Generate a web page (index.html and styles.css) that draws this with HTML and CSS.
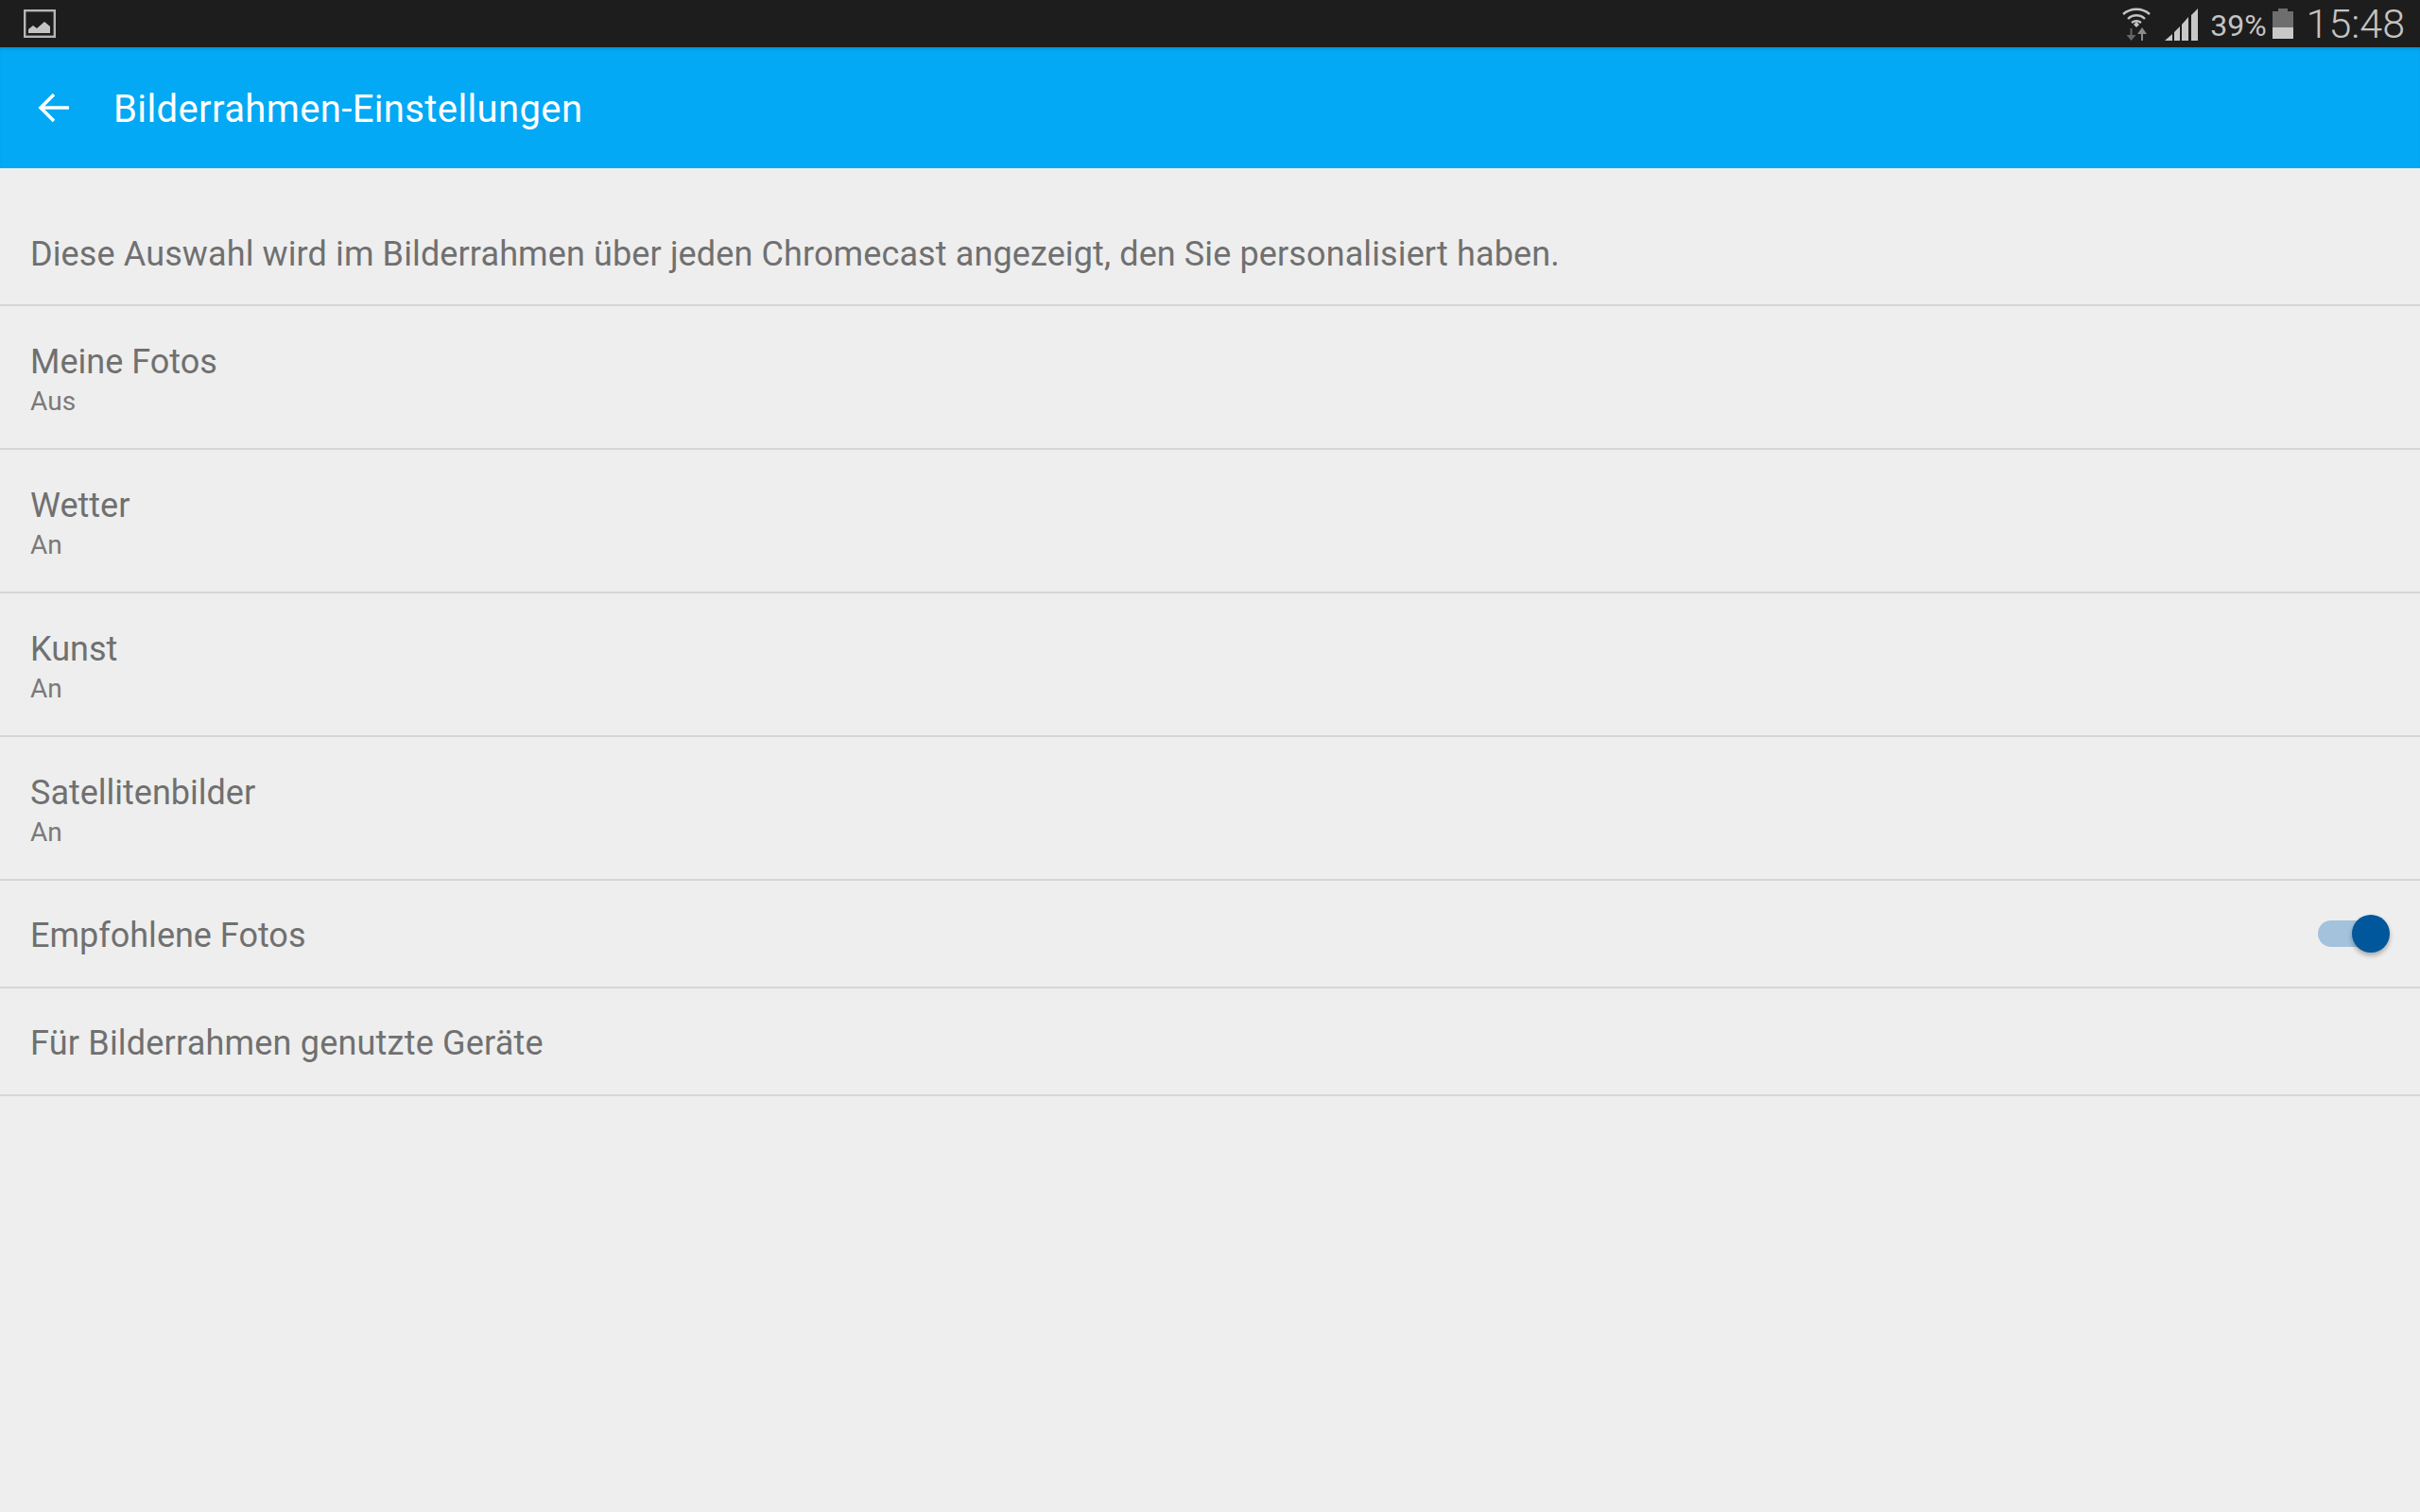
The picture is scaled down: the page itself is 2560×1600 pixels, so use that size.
FILE: index.html
```html
<!DOCTYPE html>
<html lang="de">
    <head>
        <meta charset="UTF-8">
        <meta name="viewport" content="width=device-width, initial-scale=1.0">
        <title>Bilderrahmen-Einstellungen</title>
        <link rel="stylesheet" href="styles.css">
    </head>
    <body>
        <div class="status-bar">
            <svg class="picture-icon" width="36" height="30" viewBox="0 0 36 30">
                <rect x="1.2" y="1.2" width="31.6" height="27.6" fill="none" stroke="#b5b5b5" stroke-width="2.4"/>
                <path d="M5 25 L5 21 L10 17 L14 20 L22 13 L28 18 L28 25 Z" fill="#c4c4c4"/>
            </svg>
            <div class="status-right">
                <svg class="wifi-icon" width="32" height="36" viewBox="0 0 32 36">
                    <path d="M2 7 C10 0 22 0 30 7 M7 12 C12 7 20 7 25 12 M11 16 C14 14 18 14 21 16" fill="none" stroke="#c4c4c4" stroke-width="2.4"/>
                    <path d="M13 18 L16 15 L19 18 L16 21 Z" fill="#c4c4c4"/>
                    <path d="M9.5 22 H11.5 V29 H15.5 L10.5 35 L5.5 29 H9.5 Z" fill="#666666"/>
                    <path d="M21 35 H23 V28 H27 L22 21 L17 28 H21 Z" fill="#8a8a8a"/>
                </svg>
                <svg class="signal-icon" width="36" height="36" viewBox="0 0 36 36">
                    <path d="M0 35 L8 28 V35 Z M10 35 V26 L16 20 V35 Z M18 35 V18 L25 10 V35 Z M28 35 V8 L35 1 V35 Z" fill="#c8c8c8"/>
                </svg>
                <span class="battery-text">39%</span>
                <span class="battery">
                    <span class="battery-cap"></span>
                    <span class="battery-body"><span class="battery-fill"></span></span>
                </span>
                <span class="clock">15:48</span>
            </div>
        </div>

        <div class="app-bar">
            <svg class="back-arrow" width="34" height="32" viewBox="0 0 34 32">
                <path d="M33 16 H3 M17 2 L3 16 L17 30" fill="none" stroke="#fff" stroke-width="3.6"/>
            </svg>
            <span class="app-title">Bilderrahmen-Einstellungen</span>
        </div>

        <div class="intro">Diese Auswahl wird im Bilderrahmen über jeden Chromecast angezeigt, den Sie personalisiert haben.</div>

        <div class="row row-two">
            <div class="row-title">Meine Fotos</div>
            <div class="row-sub">Aus</div>
        </div>
        <div class="row row-two">
            <div class="row-title">Wetter</div>
            <div class="row-sub">An</div>
        </div>
        <div class="row row-two">
            <div class="row-title">Kunst</div>
            <div class="row-sub">An</div>
        </div>
        <div class="row row-two">
            <div class="row-title">Satellitenbilder</div>
            <div class="row-sub">An</div>
        </div>
        <div class="row row-one row-switch">
            <div class="row-title">Empfohlene Fotos</div>
            <div class="switch"><div class="switch-knob"></div></div>
        </div>
        <div class="row row-one">
            <div class="row-title row-title-wide">Für Bilderrahmen genutzte Geräte</div>
        </div>
    </body>
</html>
```

FILE: styles.css
```css
*{
    margin: 0;
    padding: 0;
    box-sizing: border-box;
}

body{
    height: 1600px;
    overflow: hidden;
    background-color: #eeeeee;
    font-family: Roboto, "Liberation Sans", sans-serif;
    color: #707070;
}

.status-bar{
    display: flex;
    align-items: center;
    justify-content: space-between;
    height: 50px;
    padding: 0 16px 0 25px;
    background-color: #1d1d1d;
}

.status-right{
    display: flex;
    align-items: center;
    color: #c4c4c4;
}

.wifi-icon{
    margin: 2px 14px 0 0;
}

.signal-icon{
    margin: 2px 12px 0 0;
}

.battery-text{
    margin: 4px 6px 0 0;
    font-size: 32px;
}

.battery{
    display: flex;
    flex-direction: column;
    align-items: center;
    width: 22px;
    margin-right: 14px;
}

.battery-cap{
    width: 10px;
    height: 3px;
    background-color: #6e6e6e;
}

.battery-body{
    display: flex;
    align-items: flex-end;
    width: 22px;
    height: 29px;
    background-color: #6e6e6e;
}

.battery-fill{
    width: 100%;
    height: 12px;
    background-color: #c8c8c8;
}

.clock{
    font-size: 43px;
    font-weight: 300;
}

.app-bar{
    display: flex;
    align-items: center;
    height: 128px;
    padding-left: 40px;
    background-color: #03a9f4;
    box-shadow: inset 0 4px 4px -3px rgba(0, 0, 0, 0.2);
}

.back-arrow{
    margin-right: 46px;
}

.app-title{
    padding-top: 2px;
    font-size: 40px;
    letter-spacing: 0.38px;
    color: #ffffff;
}

.intro{
    display: flex;
    align-items: flex-end;
    height: 146px;
    padding: 0 32px 32px;
    font-size: 36px;
    letter-spacing: 0.115px;
    border-bottom: 2px solid #d6d6d6;
}

.row{
    padding-left: 32px;
    border-bottom: 2px solid #d6d6d6;
}

.row-two{
    height: 152px;
    padding-top: 36px;
}

.row-one{
    display: flex;
    align-items: center;
    height: 114px;
    padding-top: 3px;
}

.row-switch{
    justify-content: space-between;
    padding-right: 34px;
}

.row-title{
    font-size: 36px;
    line-height: 46px;
}

.row-title-wide{
    letter-spacing: 0.2px;
}

.row-sub{
    font-size: 28px;
    line-height: 38px;
    letter-spacing: 0.1px;
    color: #7a7a7a;
}

.switch{
    position: relative;
    top: -2px;
    width: 74px;
    height: 28px;
    border-radius: 14px;
    background-color: #a3c2dc;
}

.switch-knob{
    position: absolute;
    top: -6px;
    right: -2px;
    width: 40px;
    height: 40px;
    border-radius: 50%;
    background-color: #01579b;
    box-shadow: 0 3px 5px rgba(0, 0, 0, 0.3);
}
```
